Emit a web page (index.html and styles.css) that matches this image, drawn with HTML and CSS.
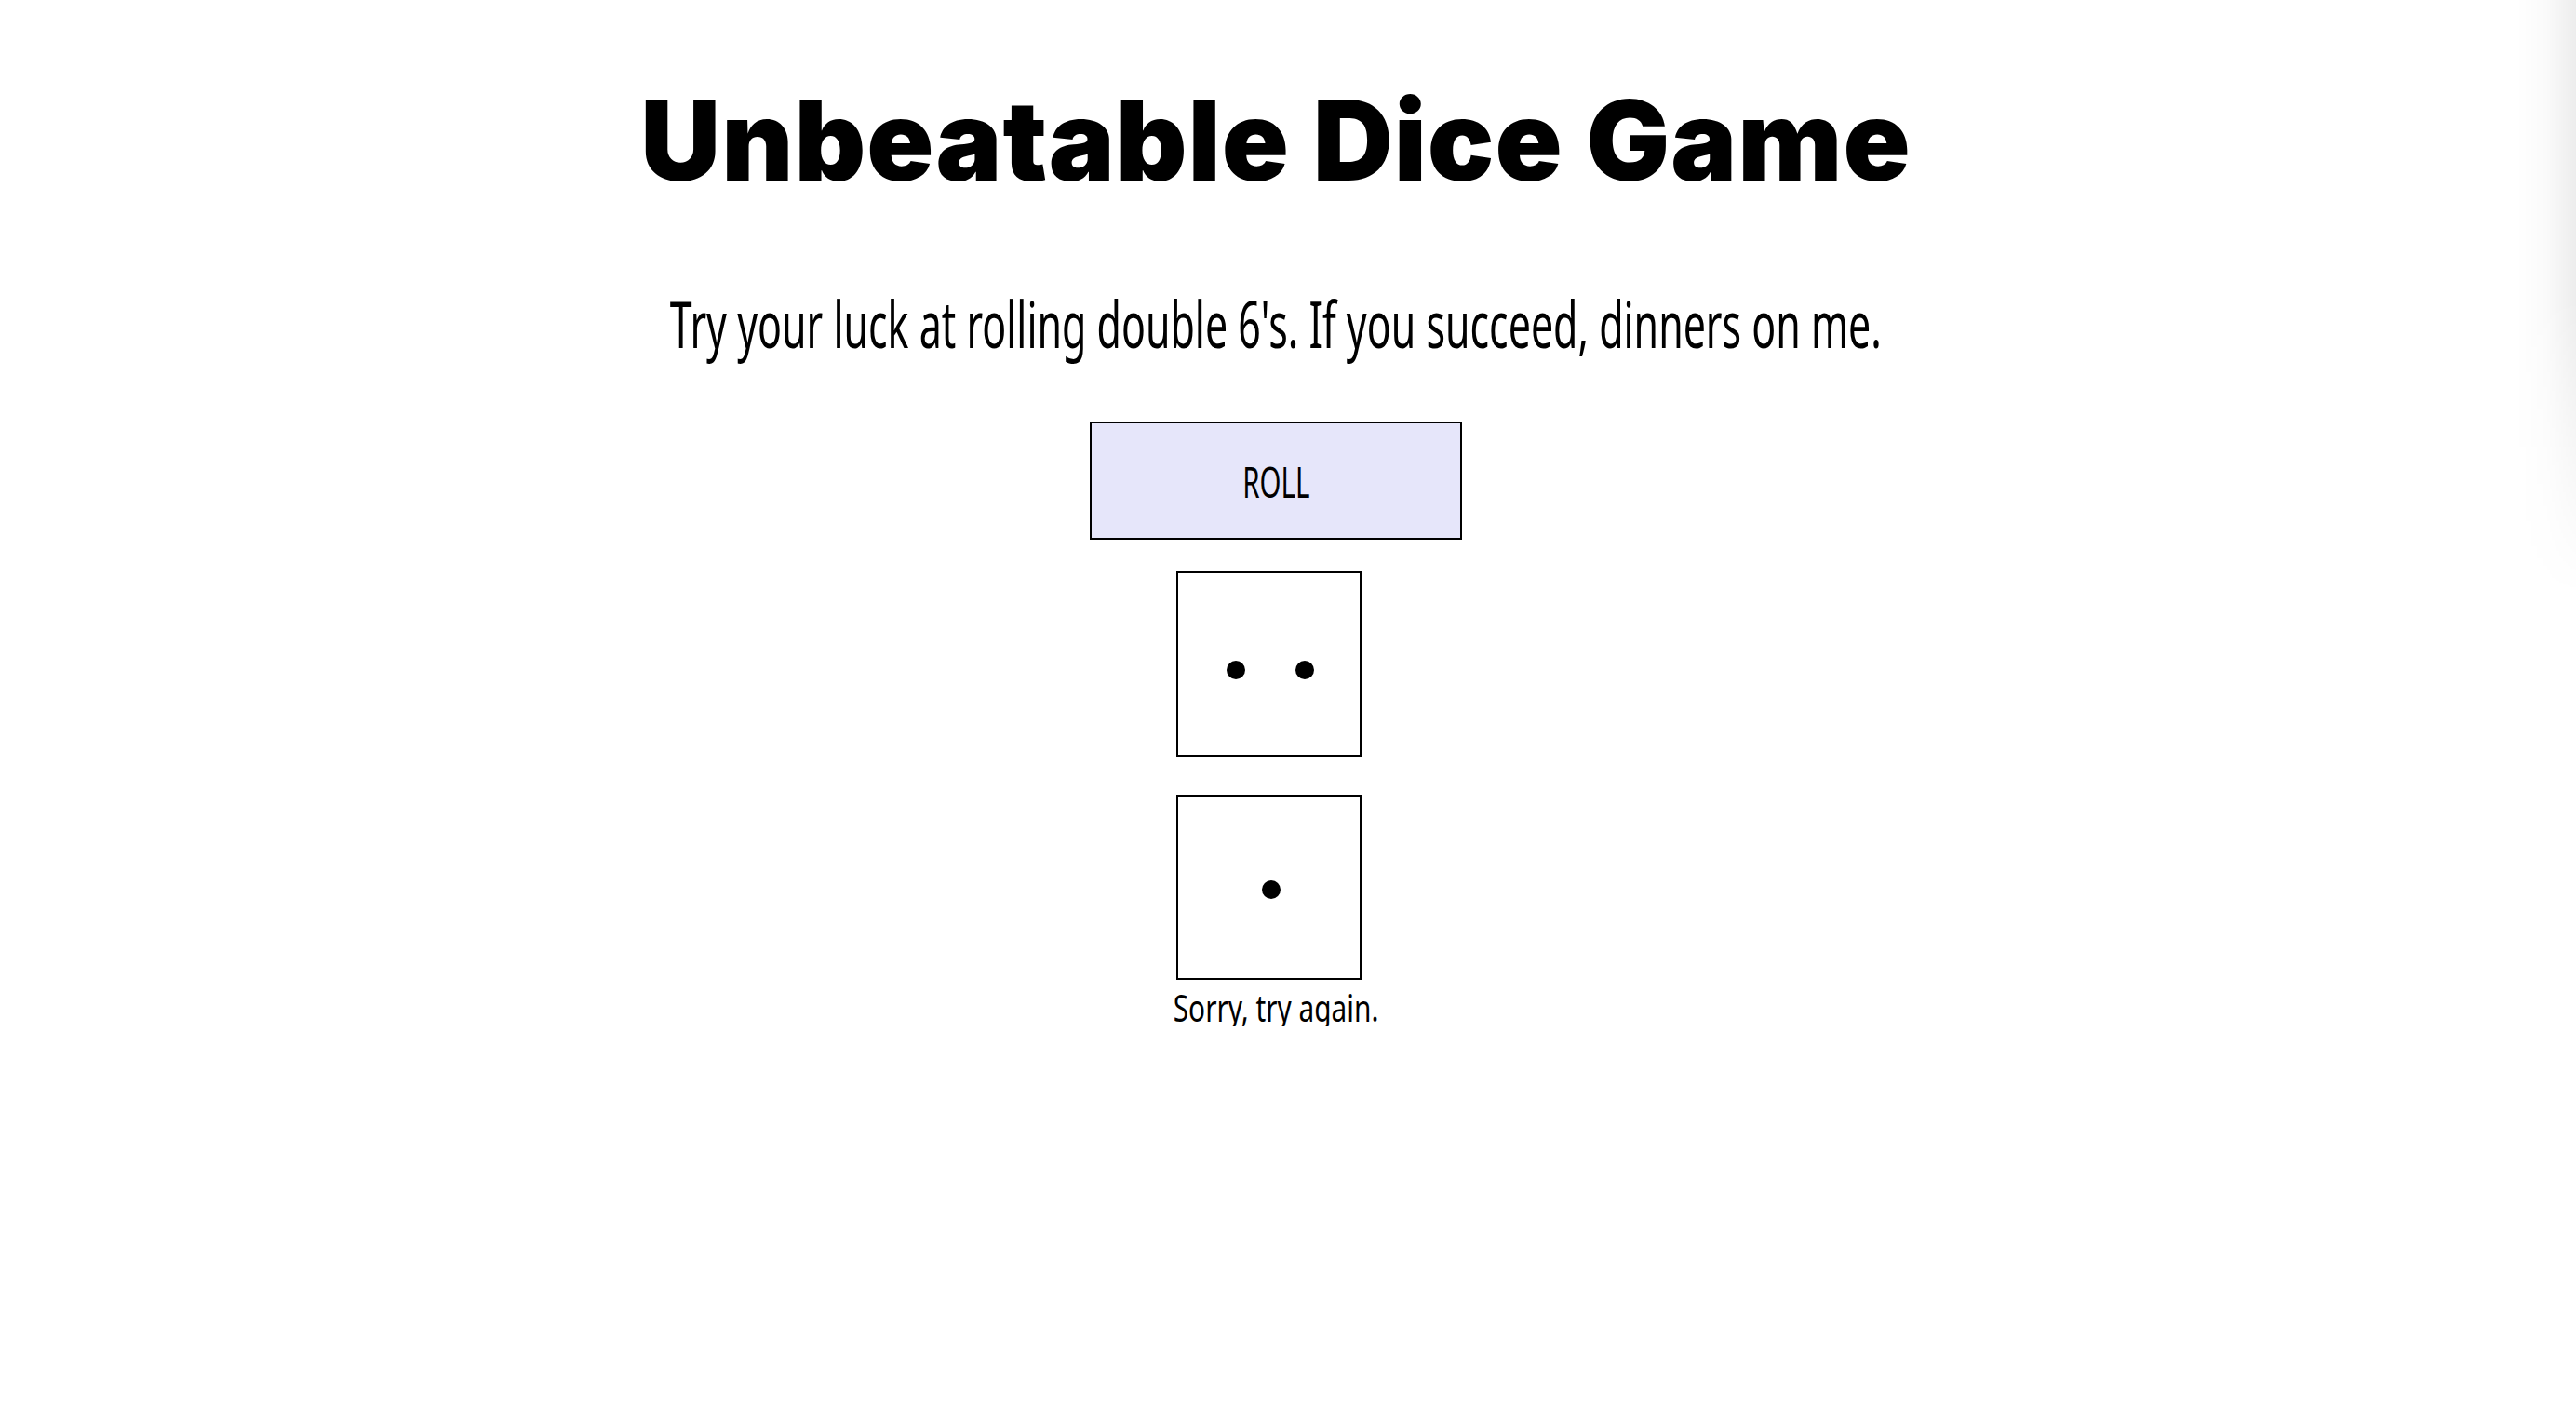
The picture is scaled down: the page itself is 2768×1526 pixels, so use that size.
FILE: index.html
```html
<!DOCTYPE html>
<html lang="en">
<head>
<meta charset="utf-8">
<title>Unbeatable Dice Game</title>
<link rel="stylesheet" href="styles.css">
</head>
<body>
<main class="page">
  <h1 class="title">Unbeatable Dice Game</h1>
  <p class="lead"><span class="squeeze squeeze-lead">Try your luck at rolling double 6's. If you succeed, dinners on me.</span></p>
  <button class="roll" type="button"><span class="squeeze squeeze-roll">ROLL</span></button>
  <div class="dice">
    <div class="die die-two">
      <span class="pip pip-left"></span>
      <span class="pip pip-right"></span>
    </div>
    <div class="die die-one">
      <span class="pip pip-center"></span>
    </div>
  </div>
  <p class="result"><span class="squeeze squeeze-result">Sorry, try again.</span></p>
</main>
<div class="edge-shadow"></div>
</body>
</html>
```
FILE: styles.css
```css
html, body {
  margin: 0;
  padding: 0;
  background: #ffffff;
  color: #000000;
}

body {
  padding-right: 26px;
}

.page {
  display: flex;
  flex-direction: column;
  align-items: center;
  text-align: center;
}

.title {
  margin: 92px 0 0;
  font-family: Inter, "Lato", "Liberation Sans", sans-serif;
  font-weight: 900;
  font-size: 119px;
  line-height: 118px;
  letter-spacing: 1px;
}

.squeeze {
  display: inline-block;
  white-space: nowrap;
  transform-origin: center center;
}

.squeeze-lead { transform: scaleX(0.622); }
.squeeze-roll { transform: scaleX(0.64); }
.squeeze-result { transform: scaleX(0.745); }

.lead {
  margin: 103px 0 0;
  font-family: "Noto Sans", "DejaVu Sans", sans-serif;
  font-weight: 400;
  font-size: 69px;
  line-height: 69px;
}

.roll {
  margin-top: 71px;
  width: 400px;
  height: 127px;
  box-sizing: border-box;
  border: 2px solid #000;
  background: #e6e6fa;
  color: #000;
  font-family: "Noto Sans", "DejaVu Sans", sans-serif;
  font-weight: 400;
  font-size: 46px;
  padding: 0;
  cursor: pointer;
}

.dice {
  margin-top: 34px;
  margin-right: 15px;
  display: flex;
  flex-direction: column;
  gap: 41px;
}

.die {
  position: relative;
  width: 199px;
  height: 199px;
  box-sizing: border-box;
  border: 2px solid #000;
  background: #fff;
}

.pip {
  position: absolute;
  width: 20px;
  height: 20px;
  border-radius: 50%;
  background: #000;
}

.pip-left { left: 52px; top: 94px; }
.pip-right { left: 126px; top: 94px; }
.pip-center { left: 90px; top: 90px; }

.result {
  margin: 10px 0 0;
  font-family: "Noto Sans", "DejaVu Sans", sans-serif;
  font-weight: 400;
  font-size: 40px;
  line-height: 40px;
}

.edge-shadow {
  position: fixed;
  top: 0;
  right: 0;
  width: 64px;
  height: 640px;
  pointer-events: none;
  background: linear-gradient(to right, rgba(0,0,0,0), rgba(0,0,0,0.02) 50%, rgba(0,0,0,0.07));
  -webkit-mask-image: linear-gradient(to bottom, #000 320px, transparent 640px);
  mask-image: linear-gradient(to bottom, #000 320px, transparent 640px);
}
```
